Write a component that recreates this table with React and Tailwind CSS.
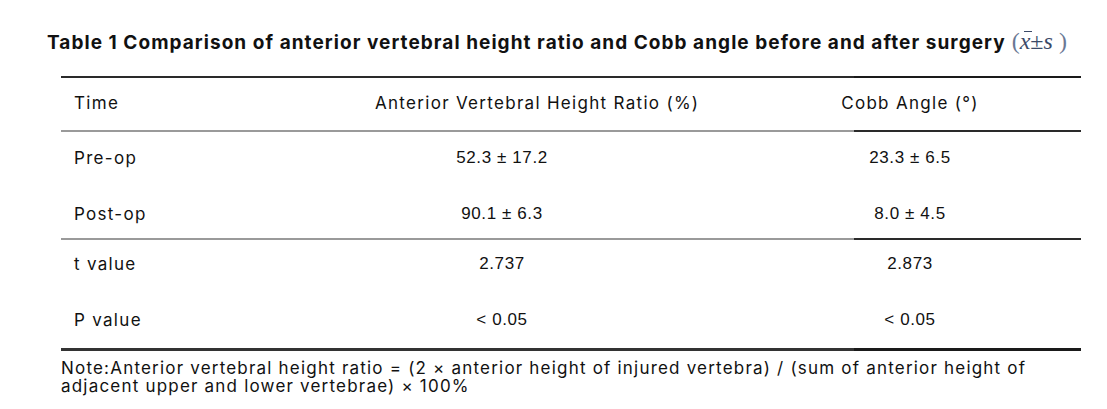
export default function App() {
  const body = "font-['Inter',sans-serif] text-[17px] tracking-[1.3px] leading-[24px] text-[#111]";
  const num = "font-['Liberation_Sans',sans-serif] text-[17px] tracking-[0.6px] leading-[24px] text-[#111]";

  const rows = [
    { t: 'Pre-op', a: '52.3 ± 17.2', b: '23.3 ± 6.5', h: 'h-[54px] pt-[14px]' },
    { t: 'Post-op', a: '90.1 ± 6.3', b: '8.0 ± 4.5', h: 'h-[52px] pt-[16px]' },
  ];
  const stats = [
    { t: 't value', a: '2.737', b: '2.873', h: 'h-[52px] pt-[12px]' },
    { t: 'P value', a: '< 0.05', b: '< 0.05', h: 'h-[56px] pt-[16px]' },
  ];

  const Line = ({ left, right, h }) => (
    <div className="flex">
      <div className={`w-[793px] ${h} ${left}`} />
      <div className={`flex-1 ${h} ${right}`} />
    </div>
  );

  const Row = ({ r }) => (
    <div className={`grid grid-cols-[300px_282px_1fr] items-start ${r.h}`}>
      <div className={`pl-[13px] ${body}`}>{r.t}</div>
      <div className={`text-center ${num}`}>{r.a}</div>
      <div className={`pl-[96px] text-center ${num}`}>{r.b}</div>
    </div>
  );

  return (
    <div className="w-[1107px] h-[409px] bg-white overflow-hidden">
      <div className="pt-[29px] pl-[47px] flex items-baseline whitespace-nowrap leading-[24px] h-[53px]">
        <h1 className="font-['Inter',sans-serif] font-bold text-[19px] text-[#111] tracking-[1.05px]">
          Table 1 Comparison of anterior vertebral height ratio and Cobb angle before and after surgery
        </h1>
        <span className="ml-[6px] font-['Liberation_Serif',serif] text-[24px] text-[#3b4a68]">
          <span className="text-[#6a7894]">(</span>
          <span className="relative italic">
            x
            <span className="absolute left-[4px] top-[3px] w-[8px] h-px bg-[#3b4a68]" />
          </span>
          ±<span className="italic">s</span>
          <span className="text-[#6a7894]"> )</span>
        </span>
      </div>

      <div className="ml-[61px] w-[1020px] mt-[23px]">
        <Line left="bg-[#2a2a2a]" right="bg-[#1a1a1a]" h="h-[2px]" />
        <div className="grid grid-cols-[300px_282px_1fr] items-start h-[52px] pt-[13px]">
          <div className={`pl-[13px] ${body}`}>Time</div>
          <div className={`pl-[14px] whitespace-nowrap ${body}`}>Anterior Vertebral Height Ratio (%)</div>
          <div className={`pl-[96px] text-center whitespace-nowrap ${body}`}>Cobb Angle (°)</div>
        </div>
        <Line left="bg-[#9a9a9a]" right="bg-[#2a2a2a]" h="h-[2px]" />
        {rows.map((r) => <Row key={r.t} r={r} />)}
        <Line left="bg-[#9a9a9a]" right="bg-[#2a2a2a]" h="h-[2px]" />
        {stats.map((r) => <Row key={r.t} r={r} />)}
        <Line left="bg-[#333]" right="bg-[#1a1a1a]" h="h-[3px]" />
      </div>

      <p className="ml-[61px] mt-[8px] whitespace-nowrap font-['Inter',sans-serif] text-[17px] tracking-[1.2px] leading-[18px] text-[#111]">
        Note:Anterior vertebral height ratio = (2 × anterior height of injured vertebra) / (sum of anterior height of
        <br />
        adjacent upper and lower vertebrae) × 100%
      </p>
    </div>
  );
}
